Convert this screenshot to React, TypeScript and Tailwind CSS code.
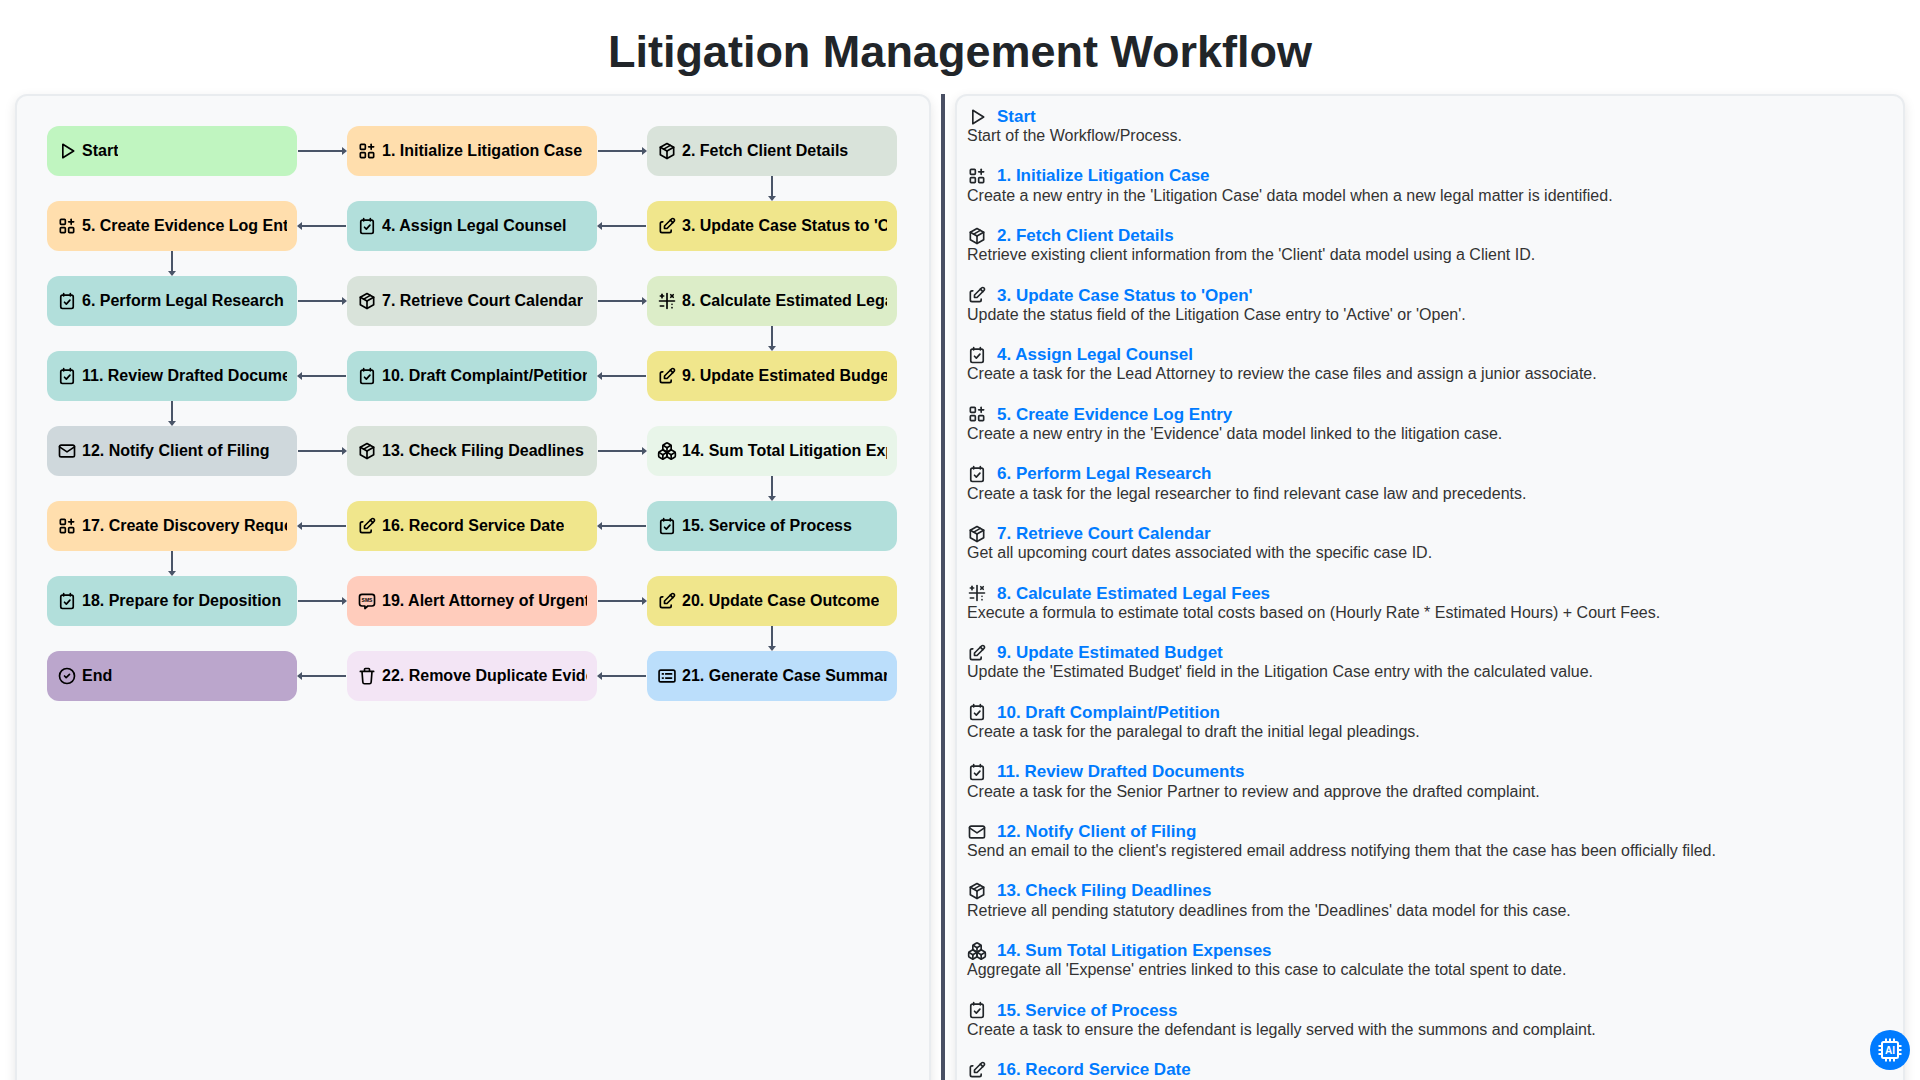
import React from 'react';
import { TbPlayerPlay, TbApps, TbPackage, TbEdit, TbMail, TbMathSymbols, TbCircleCheck } from 'react-icons/tb';
import { LuBoxes } from 'react-icons/lu';

type IconProps = { className?: string };

function TaskIcon({ className }: IconProps) {
    return (
        <svg viewBox="0 0 24 24" fill="none" stroke="currentColor" strokeWidth="2" strokeLinecap="round" strokeLinejoin="round" className={className}>
            <rect x="4.5" y="5" width="15" height="16" rx="2" />
            <path d="M8 3v3M16 3v3M9 13.5l2.2 2.2L15.5 11" />
        </svg>
    );
}

function SmsIcon({ className }: IconProps) {
    return (
        <svg viewBox="0 0 24 24" fill="none" stroke="currentColor" strokeWidth="2" strokeLinecap="round" strokeLinejoin="round" className={className}>
            <path d="M6 4h12a3 3 0 0 1 3 3v8a3 3 0 0 1-3 3h-5l-3.5 3v-3H6a3 3 0 0 1-3-3V7a3 3 0 0 1 3-3z" />
            <text x="12" y="13.5" textAnchor="middle" fontSize="6" fontWeight="700" fill="currentColor" stroke="none" fontFamily="'Liberation Sans', sans-serif">SMS</text>
        </svg>
    );
}

function TrashIcon({ className }: IconProps) {
    return (
        <svg viewBox="0 0 24 24" fill="none" stroke="currentColor" strokeWidth="2" strokeLinecap="round" strokeLinejoin="round" className={className}>
            <path d="M4 6.5h16M6 6.5l1 13a2 2 0 0 0 2 1.8h6a2 2 0 0 0 2-1.8l1-13M9 6.5V4a1 1 0 0 1 1-1h4a1 1 0 0 1 1 1v2.5" />
        </svg>
    );
}

function CardListIcon({ className }: IconProps) {
    return (
        <svg viewBox="0 0 24 24" fill="none" stroke="currentColor" strokeWidth="2" strokeLinecap="round" strokeLinejoin="round" className={className}>
            <rect x="2.5" y="5" width="19" height="14" rx="2" />
            <path d="M6.5 9.5h1M6.5 14.5h1M10.5 9.5h7M10.5 14.5h7" />
        </svg>
    );
}

const STEPS = {
    start: { label: 'Start', desc: 'Start of the Workflow/Process.', icon: TbPlayerPlay, color: 'bg-[#c0f5c0]' },
    s1: { label: '1. Initialize Litigation Case', desc: "Create a new entry in the 'Litigation Case' data model when a new legal matter is identified.", icon: TbApps, color: 'bg-[#ffdead]' },
    s2: { label: '2. Fetch Client Details', desc: "Retrieve existing client information from the 'Client' data model using a Client ID.", icon: TbPackage, color: 'bg-[#d9e3da]' },
    s3: { label: "3. Update Case Status to 'Open'", desc: "Update the status field of the Litigation Case entry to 'Active' or 'Open'.", icon: TbEdit, color: 'bg-[#f0e68c]' },
    s4: { label: '4. Assign Legal Counsel', desc: 'Create a task for the Lead Attorney to review the case files and assign a junior associate.', icon: TaskIcon, color: 'bg-[#b2dfdb]' },
    s5: { label: '5. Create Evidence Log Entry', desc: "Create a new entry in the 'Evidence' data model linked to the litigation case.", icon: TbApps, color: 'bg-[#ffdead]' },
    s6: { label: '6. Perform Legal Research', desc: 'Create a task for the legal researcher to find relevant case law and precedents.', icon: TaskIcon, color: 'bg-[#b2dfdb]' },
    s7: { label: '7. Retrieve Court Calendar', desc: 'Get all upcoming court dates associated with the specific case ID.', icon: TbPackage, color: 'bg-[#d9e3da]' },
    s8: { label: '8. Calculate Estimated Legal Fees', desc: 'Execute a formula to estimate total costs based on (Hourly Rate * Estimated Hours) + Court Fees.', icon: TbMathSymbols, color: 'bg-[#dcedc8]' },
    s9: { label: '9. Update Estimated Budget', desc: "Update the 'Estimated Budget' field in the Litigation Case entry with the calculated value.", icon: TbEdit, color: 'bg-[#f0e68c]' },
    s10: { label: '10. Draft Complaint/Petition', desc: 'Create a task for the paralegal to draft the initial legal pleadings.', icon: TaskIcon, color: 'bg-[#b2dfdb]' },
    s11: { label: '11. Review Drafted Documents', desc: 'Create a task for the Senior Partner to review and approve the drafted complaint.', icon: TaskIcon, color: 'bg-[#b2dfdb]' },
    s12: { label: '12. Notify Client of Filing', desc: "Send an email to the client's registered email address notifying them that the case has been officially filed.", icon: TbMail, color: 'bg-[#cfd8dc]' },
    s13: { label: '13. Check Filing Deadlines', desc: "Retrieve all pending statutory deadlines from the 'Deadlines' data model for this case.", icon: TbPackage, color: 'bg-[#d9e3da]' },
    s14: { label: '14. Sum Total Litigation Expenses', desc: "Aggregate all 'Expense' entries linked to this case to calculate the total spent to date.", icon: LuBoxes, color: 'bg-[#e8f5e9]' },
    s15: { label: '15. Service of Process', desc: 'Create a task to ensure the defendant is legally served with the summons and complaint.', icon: TaskIcon, color: 'bg-[#b2dfdb]' },
    s16: { label: '16. Record Service Date', desc: '', icon: TbEdit, color: 'bg-[#f0e68c]' },
    s17: { label: '17. Create Discovery Request', desc: '', icon: TbApps, color: 'bg-[#ffdead]' },
    s18: { label: '18. Prepare for Deposition', desc: '', icon: TaskIcon, color: 'bg-[#b2dfdb]' },
    s19: { label: '19. Alert Attorney of Urgent', desc: '', icon: SmsIcon, color: 'bg-[#ffccbc]' },
    s20: { label: '20. Update Case Outcome', desc: '', icon: TbEdit, color: 'bg-[#f0e68c]' },
    s21: { label: '21. Generate Case Summary', desc: '', icon: CardListIcon, color: 'bg-[#bbdefb]' },
    s22: { label: '22. Remove Duplicate Evidence', desc: '', icon: TrashIcon, color: 'bg-[#f3e5f5]' },
    end: { label: 'End', desc: '', icon: TbCircleCheck, color: 'bg-[#bba6cc]' },
};

type StepKey = keyof typeof STEPS;

const ROWS: { keys: [StepKey, StepKey, StepKey]; dir: 'right' | 'left'; downCol: number | null }[] = [
    { keys: ['start', 's1', 's2'], dir: 'right', downCol: 2 },
    { keys: ['s5', 's4', 's3'], dir: 'left', downCol: 0 },
    { keys: ['s6', 's7', 's8'], dir: 'right', downCol: 2 },
    { keys: ['s11', 's10', 's9'], dir: 'left', downCol: 0 },
    { keys: ['s12', 's13', 's14'], dir: 'right', downCol: 2 },
    { keys: ['s17', 's16', 's15'], dir: 'left', downCol: 0 },
    { keys: ['s18', 's19', 's20'], dir: 'right', downCol: 2 },
    { keys: ['end', 's22', 's21'], dir: 'left', downCol: null },
];

const LIST_KEYS: StepKey[] = ['start', 's1', 's2', 's3', 's4', 's5', 's6', 's7', 's8', 's9', 's10', 's11', 's12', 's13', 's14', 's15', 's16'];

function Node({ step }: { step: StepKey }) {
    const { label, icon: Icon, color } = STEPS[step];
    return (
        <div className={`flex items-center h-[50px] p-2.5 rounded-xl whitespace-nowrap font-bold text-base text-black ${color}`}>
            <Icon className="w-5 h-5 mr-[5px] shrink-0" />
            <span className="min-w-0 overflow-hidden">{label}</span>
        </div>
    );
}

function ArrowH({ dir }: { dir: 'right' | 'left' }) {
    return (
        <svg width="50" height="50" viewBox="0 0 50 50" className="block">
            {dir === 'right' ? (
                <>
                    <path d="M1 25H45" stroke="#4a5568" strokeWidth="2" />
                    <path d="M45 21L50 25L45 29Z" fill="#4a5568" />
                </>
            ) : (
                <>
                    <path d="M5 25H49" stroke="#4a5568" strokeWidth="2" />
                    <path d="M5 21L0 25L5 29Z" fill="#4a5568" />
                </>
            )}
        </svg>
    );
}

function ArrowDown() {
    return (
        <svg width="10" height="25" viewBox="0 0 10 25" className="block mx-auto">
            <path d="M5 0V20" stroke="#4a5568" strokeWidth="2" />
            <path d="M1 20L5 25L9 20Z" fill="#4a5568" />
        </svg>
    );
}

function FlowChart() {
    return (
        <div className="grid grid-cols-[250px_50px_250px_50px_250px]">
            {ROWS.map((row, r) => (
                <React.Fragment key={r}>
                    <Node step={row.keys[0]} />
                    <ArrowH dir={row.dir} />
                    <Node step={row.keys[1]} />
                    <ArrowH dir={row.dir} />
                    <Node step={row.keys[2]} />
                    {r < ROWS.length - 1 && (
                        <>
                            <div className="h-[25px]">{row.downCol === 0 && <ArrowDown />}</div>
                            <div />
                            <div />
                            <div />
                            <div className="h-[25px]">{row.downCol === 2 && <ArrowDown />}</div>
                        </>
                    )}
                </React.Fragment>
            ))}
        </div>
    );
}

function StepList() {
    return (
        <div className="flex flex-col gap-[20.1px]">
            {LIST_KEYS.map((key) => {
                const { label, desc, icon: Icon } = STEPS[key];
                return (
                    <div key={key}>
                        <div className="flex items-center h-[21px] text-[17px] font-bold text-[#007bff]">
                            <Icon className="w-5 h-5 mr-2.5 shrink-0 text-[#212529]" />
                            <span>{label}</span>
                        </div>
                        <p className="text-base leading-[18.5px] text-[#333333]">{desc}</p>
                    </div>
                );
            })}
        </div>
    );
}

export default function App() {
    return (
        <div className="h-screen overflow-hidden bg-white font-['Liberation_Sans',Arial,sans-serif]">
            <h1 className="pt-[26px] pb-[16px] text-center text-[45px] leading-[52px] font-bold text-[#212529]">
                Litigation Management Workflow
            </h1>
            <div className="flex gap-2.5 px-[15px] h-[1010px]">
                <div className="w-[916px] shrink-0 p-[30px] bg-[#f8f9fa] border-2 border-[#e9ecef] rounded-xl shadow-[0_4px_12px_rgba(0,0,0,0.1)]">
                    <FlowChart />
                </div>
                <div className="w-1 shrink-0 bg-[#4a5064]" />
                <div className="flex-1 pt-2.5 px-2.5 bg-[#f8f9fa] border-2 border-[#e9ecef] rounded-xl shadow-[0_4px_12px_rgba(0,0,0,0.1)] overflow-hidden">
                    <StepList />
                </div>
            </div>
            <button className="fixed right-2.5 bottom-2.5 flex items-center justify-center w-10 h-10 rounded-full bg-[#007bff] text-white">
                <svg viewBox="0 0 24 24" fill="none" stroke="currentColor" strokeWidth="2" className="w-6 h-6">
                    <rect x="4" y="4" width="16" height="16" rx="1.5" />
                    <path d="M8 0.5V3M12 0.5V3M16 0.5V3M8 21V23.5M12 21V23.5M16 21V23.5M0.5 8H3M0.5 12H3M0.5 16H3M21 8H23.5M21 12H23.5M21 16H23.5" />
                    <text x="12" y="15.5" textAnchor="middle" fontSize="10" fontWeight="700" fill="currentColor" stroke="none" fontFamily="'Liberation Sans', sans-serif">AI</text>
                </svg>
            </button>
        </div>
    );
}
